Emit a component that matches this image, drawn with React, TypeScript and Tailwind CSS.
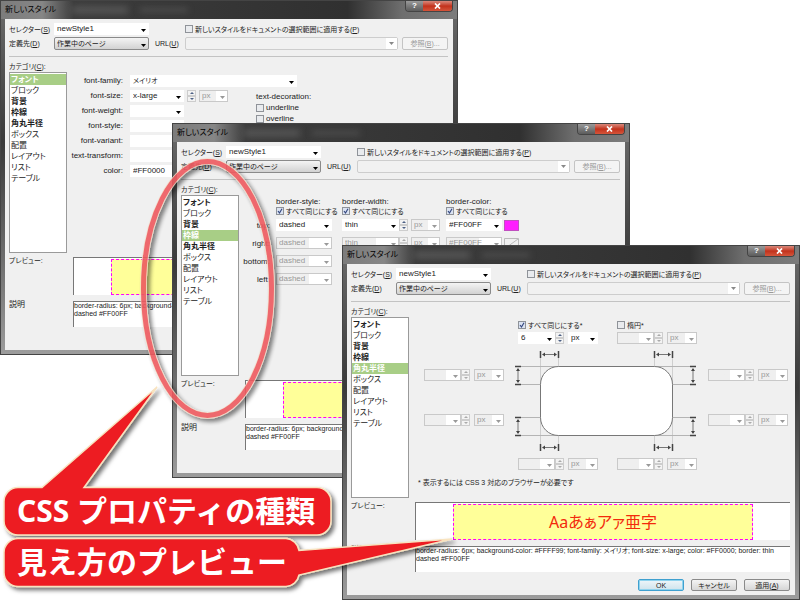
import { useId, useState } from 'react';
import type { ReactNode } from 'react';
import clsx from 'clsx';

const categories = [
  'フォント',
  'ブロック',
  '背景',
  '枠線',
  '角丸半径',
  'ボックス',
  '配置',
  'レイアウト',
  'リスト',
  'テーブル',
];

// Categories that already hold a value are listed in bold
const edited = ['フォント', '背景', '枠線', '角丸半径'];

interface ComboProps {
  value?: string;
  label?: string;
  id?: string;
  disabled?: boolean;
  raised?: boolean;
  className: string;
}

function Combo({ value = '', label, id, disabled, raised, className }: ComboProps) {
  return (
    <span className={clsx('relative block shrink-0', className)}>
      <select
        id={id}
        aria-label={label}
        disabled={disabled}
        defaultValue={value}
        className={clsx(
          'block h-full w-full appearance-none border pl-[2px] leading-none',
          disabled && 'border-[#c9c9c9] bg-linear-to-r from-[#efefef] from-60% to-white to-60% text-[#999]',
          raised && 'rounded-xs border-[#8a8a8a] bg-linear-to-b from-[#f4f4f4] to-[#d2d2d2]',
          !disabled && !raised && 'border-white bg-white'
        )}
      >
        <option>{value}</option>
      </select>
      <svg
        viewBox="0 0 5 3"
        className={clsx(
          'pointer-events-none absolute top-1/2 right-[3px] h-[3px] w-[5px]',
          disabled ? 'text-[#999]' : 'text-black'
        )}
      >
        <path d="M0 0h5L2.5 3z" fill="currentColor" />
      </svg>
    </span>
  );
}

function Spinner({ disabled }: { disabled?: boolean }) {
  return (
    <span className={clsx('flex h-3 w-[9px] shrink-0 flex-col', disabled ? 'text-[#aaa]' : 'text-[#4d6185]')}>
      <button aria-label="増やす" disabled={disabled} className="flex h-[6px] items-center justify-center border border-[#cdcdcd] bg-[#f3f3f3]">
        <svg viewBox="0 0 4 2" className="h-[2px] w-1">
          <path d="M0 2h4L2 0z" fill="currentColor" />
        </svg>
      </button>
      <button aria-label="減らす" disabled={disabled} className="flex h-[6px] items-center justify-center border border-[#cdcdcd] bg-[#f3f3f3]">
        <svg viewBox="0 0 4 2" className="h-[2px] w-1">
          <path d="M0 0h4L2 2z" fill="currentColor" />
        </svg>
      </button>
    </span>
  );
}

function Check({ children, checked }: { children: ReactNode; checked?: boolean }) {
  return (
    <label className="flex items-center gap-[2px] whitespace-nowrap">
      <span className="relative block size-2 shrink-0">
        <input
          type="checkbox"
          defaultChecked={checked}
          className="peer block size-2 appearance-none border border-[#8f9399] bg-[#e9ebee] checked:bg-[#dbe3f2]"
        />
        <svg viewBox="0 0 8 8" className="pointer-events-none absolute inset-0 hidden size-2 peer-checked:block">
          <path d="M2 4l1.5 2L6 1.8" fill="none" stroke="#34477f" strokeWidth="1.2" />
        </svg>
      </span>
      {children}
    </label>
  );
}

function Length({ value = '', label, disabled = true }: { value?: string; label: string; disabled?: boolean }) {
  return (
    <div className="flex items-center">
      <Combo value={value} label={label} disabled={disabled} className="h-3 w-[37px]" />
      <Spinner disabled={disabled} />
      <Combo value="px" label={`${label} 単位`} disabled={disabled} className="ml-[4px] h-3 w-[30px]" />
    </div>
  );
}

function PushButton({ children, primary, disabled }: { children: ReactNode; primary?: boolean; disabled?: boolean }) {
  return (
    <button
      disabled={disabled}
      className={clsx(
        'flex w-[46px] items-center justify-center rounded-xs border text-[7px] leading-none',
        disabled && 'h-[13px] border-[#c4c4c4] bg-[#f4f4f4] text-[#999]',
        primary && 'h-3 border-[#3fa0cf] bg-linear-to-b from-[#eef6fa] to-[#cfe3ec] ring-1 ring-[#8fd3ee] ring-inset',
        !primary && !disabled && 'h-3 border-[#8a8a8a] bg-linear-to-b from-[#f4f4f4] to-[#d6d6d6]'
      )}
    >
      {children}
    </button>
  );
}

interface StyleDialogProps {
  category: string;
  className: string;
  sample?: string;
  actions?: ReactNode;
  children: ReactNode;
}

function StyleDialog({ category, className, sample, actions, children }: StyleDialogProps) {
  const id = useId();
  const [active, setActive] = useState(category);

  return (
    <section
      className={clsx(
        'absolute w-[458px] border border-[#444] bg-linear-to-b from-[#6c6c6c] from-0% via-[#3a3a3a] via-40% to-[#9c9c9c] p-1 pt-0 text-[8px] leading-none text-[#222]',
        className
      )}
    >
      {/* Glass title bar */}
      <header className="-mx-1 flex h-[18px] items-start justify-between bg-[linear-gradient(to_right,#7c7c7c_0%,#868686_9%,#3c3c3c_16%,#303030_76%,#6e6e6e_88%,#7c7c7c_100%)]">
        <div className="flex h-full items-center pl-1">
          <span className="whitespace-nowrap text-black">新しいスタイル</span>
          <span className="ml-4 h-2 w-14 bg-[#777]/40 blur-[3px]" />
          <span className="ml-3 h-1 w-12 bg-[#777]/40 blur-[3px]" />
        </div>
        <div className="mr-1 flex h-[11px] overflow-hidden rounded-b-sm border border-t-0 border-[#444]">
          <button aria-label="ヘルプ" className="w-[17px] bg-linear-to-b from-[#9a9a9a] to-[#5c5c5c] font-bold text-white">
            ?
          </button>
          <button aria-label="閉じる" className="flex w-[29px] items-center justify-center bg-linear-to-b from-[#d9877a] via-[#c2311b] via-50% to-[#d5543a]">
            <svg viewBox="0 0 7 6" className="h-[6px] w-[7px]">
              <path d="M1 .5l5 5M6 .5l-5 5" stroke="#fff" strokeWidth="1.7" />
            </svg>
          </button>
        </div>
      </header>

      <div className="bg-[#f0f0f0] px-1 pt-1 pb-1">
        <div className="grid grid-cols-[45px_95px_36px_1fr] gap-y-[2px] pr-[1px]">
          <label htmlFor={`${id}-sel`} className="self-center text-[7px] whitespace-nowrap">
            セレクター(<u>S</u>)
          </label>
          <Combo id={`${id}-sel`} value="newStyle1" className="h-3 w-[95px]" />
          <span />
          <Check>
            <span className="text-[7px]">
              新しいスタイルをドキュメントの選択範囲に適用する(<u>P</u>)
            </span>
          </Check>
          <label htmlFor={`${id}-def`} className="self-center text-[7px] whitespace-nowrap">
            定義先(<u>D</u>)
          </label>
          <Combo id={`${id}-def`} value="作業中のページ" raised className="h-[13px] w-[95px] text-[7px]" />
          <label htmlFor={`${id}-url`} className="self-center pl-[6px] text-[7px]">
            URL(<u>U</u>)
          </label>
          <div className="flex justify-between">
            <span className="relative block h-[13px] w-[213px]">
              <input id={`${id}-url`} disabled className="block h-full w-full rounded-xs border border-[#cdcdcd] bg-[#f1f1f1] px-1" />
              <span className="absolute top-[1px] right-[1px] flex h-[11px] w-[11px] items-center justify-center bg-white">
                <svg viewBox="0 0 5 3" className="h-[3px] w-[5px]">
                  <path d="M0 0h5L2.5 3z" fill="#888" />
                </svg>
              </span>
            </span>
            <PushButton disabled>
              <span>
                参照(<u>B</u>)...
              </span>
            </PushButton>
          </div>
        </div>

        <hr className="mt-[6px] mr-[1px] border-[#c3c3c3]" />

        <div className="mt-[3px] flex">
          <div className="w-[58px] shrink-0">
            <p id={`${id}-cat`} className="flex h-3 items-center text-[7px]">
              カテゴリ(<u>C</u>):
            </p>
            <ul aria-labelledby={`${id}-cat`} className="h-[181px] border border-[#9a9a9a] bg-white py-[1px]">
              {categories.map(name => (
                <li key={name}>
                  <button
                    onClick={() => setActive(name)}
                    className={clsx(
                      'flex h-[11px] w-full items-center pl-[1px] text-left whitespace-nowrap',
                      edited.includes(name) && 'font-bold',
                      active === name && 'bg-[#a8ce86] text-white'
                    )}
                  >
                    {name}
                  </button>
                </li>
              ))}
            </ul>
          </div>
          <div className="min-w-0 flex-1">{children}</div>
        </div>

        <div className="mt-1 mr-[1px] grid grid-cols-[64px_1fr] gap-y-[6px]">
          <p className="text-[7px]">プレビュー:</p>
          <div className="flex h-[38px] border-t border-l border-[#777] bg-white px-[37px] pt-[1px]">
            <div className="flex flex-1 items-center justify-center border border-dashed border-[#ff00ff] bg-[#ffff99] font-['Noto_Sans','Noto_Sans_CJK_JP',sans-serif] text-[16px] text-[#f32a0c]">
              {sample}
            </div>
          </div>
          <p>説明</p>
          <p className="h-[26px] border-t border-l border-[#777] bg-white text-[7px] leading-[8px]">
            border-radius: 6px; background-color: #FFFF99; font-family: メイリオ; font-size: x-large; color: #FF0000; border: thin
            dashed #FF00FF
          </p>
        </div>

        <div className="mt-[7px] mr-[1px] flex h-3 justify-end gap-[7px]">{actions}</div>
      </div>
    </section>
  );
}

function FontPanel() {
  const rows = [
    { name: 'font-weight', value: '' },
    { name: 'font-style', value: '' },
    { name: 'font-variant', value: '' },
    { name: 'text-transform', value: '' },
    { name: 'color', value: '#FF0000' },
  ];
  return (
    <div className="pt-[13px]">
      <div className="flex h-[15px] items-center gap-[7px]">
        <span className="w-14 text-right">font-family:</span>
        <Combo label="font-family" value="メイリオ" className="h-3 w-[167px] text-[7px]" />
      </div>
      <div className="flex gap-7">
        <div>
          <div className="flex h-[15px] items-center gap-[7px]">
            <span className="w-14 text-right">font-size:</span>
            <div className="flex items-center gap-[3px]">
              <Combo label="font-size" value="x-large" className="h-3 w-[54px]" />
              <Spinner />
              <Combo label="font-size 単位" value="px" disabled className="h-3 w-[29px]" />
            </div>
          </div>
          {rows.map(row => (
            <div key={row.name} className="flex h-[15px] items-center gap-[7px]">
              <span className="w-14 text-right whitespace-nowrap">{row.name}:</span>
              <Combo label={row.name} value={row.value} className="h-3 w-[54px]" />
            </div>
          ))}
        </div>
        <div className="flex flex-col gap-[3px] pt-[5px]">
          <span>text-decoration:</span>
          <Check>underline</Check>
          <Check>overline</Check>
        </div>
      </div>
    </div>
  );
}

function SameForAll() {
  return (
    <div className="flex h-[10px] items-center">
      <Check checked>
        <span className="text-[7px]">すべて同じにする</span>
      </Check>
    </div>
  );
}

function BorderPanel() {
  const sides = ['top', 'right', 'bottom', 'left'];
  return (
    <div className="grid grid-cols-[31px_60px_98px_1fr] gap-x-[6px] pt-[15px]">
      <div className="pt-[19px]">
        {sides.map(side => (
          <p key={side} className="flex h-[18px] items-center justify-end">
            {side}:
          </p>
        ))}
      </div>
      <div>
        <p>border-style:</p>
        <SameForAll />
        {sides.map((side, i) => (
          <div key={side} className="flex h-[18px] items-center">
            <Combo label={`border-${side}-style`} value="dashed" disabled={i > 0} className="h-3 w-[56px]" />
          </div>
        ))}
      </div>
      <div>
        <p>border-width:</p>
        <SameForAll />
        {sides.slice(0, 2).map((side, i) => (
          <div key={side} className="flex h-[18px] items-center">
            <Combo label={`border-${side}-width`} value="thin" disabled={i > 0} className="h-3 w-[57px]" />
            <Spinner disabled={i > 0} />
            <Combo label={`border-${side}-width 単位`} value="px" disabled className="ml-[3px] h-3 w-[29px]" />
          </div>
        ))}
      </div>
      <div>
        <p>border-color:</p>
        <SameForAll />
        {sides.slice(0, 2).map((side, i) => (
          <div key={side} className="flex h-[18px] items-center gap-[2px]">
            <Combo label={`border-${side}-color`} value="#FF00FF" disabled={i > 0} className="h-3 w-[56px]" />
            {i === 0 ? (
              <span className="h-[11px] w-[15px] border border-[#c050c0] bg-[#ff1fff]" />
            ) : (
              <svg viewBox="0 0 15 11" className="h-[11px] w-[15px]">
                <path d="M.5.5h14v10H.5zM1 10.5L14 1" fill="none" stroke="#bbb" />
              </svg>
            )}
          </div>
        ))}
      </div>
    </div>
  );
}

// Dimension arrows around the rounded box
function CornerDiagram() {
  return (
    <svg viewBox="0 0 182 104" className="h-[104px] w-[182px]" fill="none">
      <g stroke="#cfcfcf">
        <path d="M25.5 8v28M43.5 8v10M139.5 8v10M157.5 8v28M25.5 68v27M43.5 86v9M139.5 86v9M157.5 68v27" />
        <path d="M4 17.5h40M4 35.5h22M4 68.5h22M4 86.5h40M138 17.5h42M157 35.5h23M157 68.5h23M138 86.5h42" stroke="#b4b4b4" />
      </g>
      <rect x="25.500" y="17.500" width="132" height="69" rx="18" fill="#fff" stroke="#777" />
      <g stroke="#444" strokeWidth="1.500">
        <path d="M25.5 2v7M43.5 2v7M139.5 2v7M157.5 2v7M25.5 95v7M43.5 95v7M139.5 95v7M157.5 95v7" />
        <path d="M0 17.5h6M0 35.5h6M0 68.5h6M0 86.5h6M175 17.5h6M175 35.5h6M175 68.5h6M175 86.5h6" />
      </g>
      <g stroke="#777">
        <path d="M28 5.5h13M142 5.5h13M28 98.5h13M142 98.5h13M3 20v13M3 71v13M178 20v13M178 71v13" />
      </g>
      <g fill="#444">
        <path d="M27 5.5l3-2v4zM42 5.5l-3-2v4zM141 5.5l3-2v4zM156 5.5l-3-2v4z" />
        <path d="M27 98.5l3-2v4zM42 98.5l-3-2v4zM141 98.5l3-2v4zM156 98.5l-3-2v4z" />
        <path d="M3 19l-2 3h4zM3 34l-2-3h4zM3 70l-2 3h4zM3 85l-2-3h4z" />
        <path d="M178 19l-2 3h4zM178 34l-2-3h4zM178 70l-2 3h4zM178 85l-2-3h4z" />
      </g>
    </svg>
  );
}

function RadiusPanel() {
  return (
    <div className="pt-4">
      <div className="grid grid-cols-[99px_1fr] pl-[109px]">
        <div className="flex flex-col gap-[3px]">
          <Check checked>
            <span className="text-[7px]">すべて同じにする*</span>
          </Check>
          <Length label="半径" value="6" disabled={false} />
        </div>
        <div className="flex flex-col gap-[3px]">
          <Check>
            <span className="text-[7px]">楕円*</span>
          </Check>
          <Length label="楕円" />
        </div>
      </div>
      <div className="mt-[5px] flex pl-[15px]">
        <div className="flex w-[91px] flex-col gap-[33px] pt-5">
          <Length label="左上" />
          <Length label="左下" />
        </div>
        <CornerDiagram />
        <div className="flex flex-col gap-[33px] pt-5 pl-[11px]">
          <Length label="右上" />
          <Length label="右下" />
        </div>
      </div>
      <div className="mt-[5px] grid grid-cols-[99px_1fr] pl-[109px]">
        <Length label="下左" />
        <Length label="下右" />
      </div>
      <p className="mt-[9px] pl-[9px] text-[7px]">* 表示するには CSS 3 対応のブラウザーが必要です</p>
    </div>
  );
}

export default function App() {
  return (
    <main className="relative min-h-screen w-full overflow-hidden bg-white font-['Liberation_Sans','Noto_Sans_CJK_JP',sans-serif] [font-feature-settings:'palt']">
      <StyleDialog category="フォント" className="top-0 left-0">
        <FontPanel />
      </StyleDialog>
      <StyleDialog category="枠線" className="top-[123px] left-[172px]">
        <BorderPanel />
      </StyleDialog>
      <StyleDialog
        category="角丸半径"
        className="top-[245px] left-[342px]"
        sample="Aaあぁアァ亜字"
        actions={
          <>
            <PushButton primary>OK</PushButton>
            <PushButton>キャンセル</PushButton>
            <PushButton>
              <span>
                適用(<u>A</u>)
              </span>
            </PushButton>
          </>
        }
      >
        <RadiusPanel />
      </StyleDialog>

      {/* Callout marks over the windows */}
      <svg viewBox="0 0 800 600" className="pointer-events-none absolute top-0 left-0 h-[600px] w-[800px]">
        <defs>
          <filter id="mark-shadow" x="-10%" y="-10%" width="125%" height="125%">
            <feDropShadow dx="3" dy="3" stdDeviation="2" floodColor="#000" floodOpacity="0.55" />
          </filter>
        </defs>
        <g filter="url(#mark-shadow)" opacity="0.9">
          <ellipse cx="207.500" cy="288.500" rx="64" ry="127" fill="none" stroke="#f3dcc8" strokeWidth="6.500" />
          <ellipse cx="207.500" cy="288.500" rx="64" ry="127" fill="none" stroke="#ee5a5e" strokeWidth="5" />
        </g>
        <g fill="#ed1c24" stroke="#f8e3bf" strokeWidth="1.500" filter="url(#mark-shadow)">
          <path d="M18 487.500H42L157 387L84 487.500H317a14 14 0 0 1 14 14V521a14 14 0 0 1-14 14H18a14 14 0 0 1-14-14V501.500a14 14 0 0 1 14-14z" />
          <path d="M18 538.500H286a14 14 0 0 1 13 12L452 539L299 575a14 14 0 0 1-13 11.500H18a14 14 0 0 1-14-14V552.500a14 14 0 0 1 14-14z" />
        </g>
      </svg>
      <div className="absolute top-[486px] left-[17px] flex flex-col gap-[3px] font-['Noto_Sans','Noto_Sans_CJK_JP',sans-serif] text-[30px] font-bold whitespace-nowrap text-white [font-feature-settings:normal]">
        <p className="flex h-12 items-center">CSS プロパティの種類</p>
        <p className="flex h-12 items-center">見え方のプレビュー</p>
      </div>
    </main>
  );
}
